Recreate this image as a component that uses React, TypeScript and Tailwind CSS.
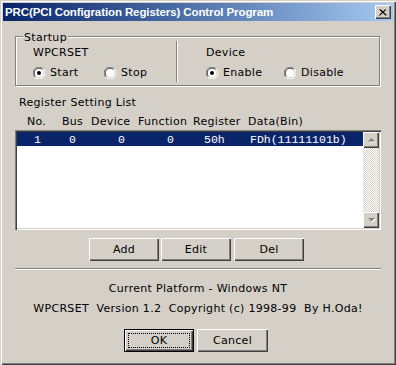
import React from "react";

const raised =
  "bg-[#d4d0c8] shadow-[inset_1px_1px_#ffffff,inset_-1px_-1px_#404040,inset_-2px_-2px_#808080]";

const Radio = ({ checked }: { checked: boolean }) => (
  <svg width="12" height="12" viewBox="0 0 12 12" className="shrink-0">
    <circle cx="6" cy="6" r="5.5" fill="#ffffff" />
    <path d="M1.8 10.2 A5.5 5.5 0 0 1 10.2 1.8" fill="none" stroke="#808080" />
    <path d="M10.2 1.8 A5.5 5.5 0 0 1 1.8 10.2" fill="none" stroke="#ffffff" />
    <path d="M2.6 9.4 A4.5 4.5 0 0 1 9.4 2.6" fill="none" stroke="#404040" />
    <path d="M9.4 2.6 A4.5 4.5 0 0 1 2.6 9.4" fill="none" stroke="#d4d0c8" />
    {checked && <circle cx="6" cy="6" r="2" fill="#000000" />}
  </svg>
);

const RadioItem = ({
  label,
  checked,
  className,
}: {
  label: string;
  checked: boolean;
  className?: string;
}) => (
  <div className={`flex items-center gap-[5px] ${className ?? ""}`}>
    <Radio checked={checked} />
    <span>{label}</span>
  </div>
);

const Arrow = ({ down }: { down?: boolean }) => (
  <svg width="7" height="4" viewBox="0 0 7 4" className="overflow-visible">
    <polygon
      points={down ? "1,1 8,1 4.5,4.5" : "1,4.5 8,4.5 4.5,1"}
      fill="#ffffff"
    />
    <polygon points={down ? "0,0 7,0 3.5,3.5" : "0,3.5 7,3.5 3.5,0"} fill="#808080" />
  </svg>
);

const Button = ({ label, className }: { label: string; className?: string }) => (
  <div
    className={`flex h-[23px] w-[70px] items-center justify-center ${raised} ${className ?? ""}`}
  >
    {label}
  </div>
);

export default function App() {
  return (
    <div className="h-[365px] w-[396px] bg-[#d4d0c8] p-[3px] font-['DejaVu_Sans',sans-serif] text-[11px] leading-[13px] tracking-[0.3px] text-black shadow-[inset_1px_1px_#d4d0c8,inset_2px_2px_#ffffff,inset_-1px_-1px_#404040,inset_-2px_-2px_#808080]">
      {/* title bar */}
      <div className="flex h-[18px] items-center justify-between bg-linear-to-r from-[#0a246a] to-[#a6caf0] pl-[2px] pr-[2px]">
        <span className="font-['Liberation_Sans',sans-serif] text-[11.5px] font-bold tracking-[-0.1px] text-white">
          PRC(PCI Configration Registers) Control Program
        </span>
        <div className={`flex h-[14px] w-[16px] items-center justify-center ${raised}`}>
          <svg width="8" height="7" viewBox="0 0 8 7">
            <path d="M0.5 0.5 L7 6.5 M1.5 0.5 L7.5 6 M7 0.5 L0.5 6.5 M6.5 0.5 L0.5 6" stroke="#000" strokeWidth="1" />
          </svg>
        </div>
      </div>

      <div className="px-[12px]">
        {/* Startup group */}
        <div className="relative mt-[15px] flex h-[50px] w-[365px] border border-[#808080] shadow-[inset_1px_1px_#ffffff,1px_1px_#ffffff]">
          <span className="absolute left-[7px] top-[-6px] bg-[#d4d0c8] px-[1px]">Startup</span>
          <div className="w-[160px] pl-[17px] pt-[9px]">
            <div>WPCRSET</div>
            <div className="mt-[7px] flex h-[13px]">
              <RadioItem label="Start" checked className="w-[71px]" />
              <RadioItem label="Stop" checked={false} />
            </div>
          </div>
          <div className="mt-[4px] h-[41px] w-[2px] border-l border-r border-l-[#808080] border-r-white" />
          <div className="pl-[28px] pt-[9px]">
            <div>Device</div>
            <div className="mt-[7px] flex h-[13px]">
              <RadioItem label="Enable" checked className="w-[78px]" />
              <RadioItem label="Disable" checked={false} />
            </div>
          </div>
        </div>

        <div className="ml-[4px] mt-[10px]">Register Setting List</div>

        <div className="mt-[6px] flex pl-[12px]">
          <span className="w-[35px]">No.</span>
          <span className="w-[29px]">Bus</span>
          <span className="w-[47px]">Device</span>
          <span className="w-[55px]">Function</span>
          <span className="w-[55px]">Register</span>
          <span>Data(Bin)</span>
        </div>

        {/* list box */}
        <div className="mt-[2px] flex h-[100px] w-[366px] bg-white p-[2px] shadow-[inset_1px_1px_#808080,inset_2px_2px_#404040,inset_-1px_-1px_#ffffff,inset_-2px_-2px_#d4d0c8]">
          <div className="flex-1">
            <div className="flex h-[14px] items-center bg-[#0a246a] pl-[17px] font-['Liberation_Mono',monospace] text-[11.5px] tracking-normal text-white">
              <span className="w-[35px]">1</span>
              <span className="w-[49px]">0</span>
              <span className="w-[49px]">0</span>
              <span className="w-[37px]">0</span>
              <span className="w-[46px]">50h</span>
              <span>FDh(11111101b)</span>
            </div>
          </div>
          <div className="flex w-[16px] flex-col">
            <div className={`flex h-[16px] items-center justify-center ${raised}`}>
              <Arrow />
            </div>
            <div className="flex-1 bg-[repeating-conic-gradient(#d4d0c8_0_25%,#ffffff_0_50%)] bg-[length:2px_2px]" />
            <div className={`flex h-[16px] items-center justify-center ${raised}`}>
              <Arrow down />
            </div>
          </div>
        </div>

        <div className="ml-[74px] mt-[8px] flex">
          <Button label="Add" />
          <Button label="Edit" className="ml-[2px]" />
          <Button label="Del" className="ml-[3px]" />
        </div>

        <div className="mt-[7px] h-[2px] w-[366px] border-b border-t border-b-white border-t-[#808080]" />

        <div className="mt-[12px] text-center">Current Platform - Windows NT</div>
        <div className="mt-[7px] whitespace-pre text-center">
          WPCRSET  Version 1.2  Copyright (c) 1998-99  By H.Oda!
        </div>

        <div className="ml-[109px] mt-[14px] flex gap-[3px]">
          <div className="h-[23px] w-[70px] border border-black">
            <div
              className={`flex h-full w-full items-center justify-center p-[3px] bg-[#d4d0c8] shadow-[inset_1px_1px_#ffffff,inset_-1px_-1px_#404040,inset_-2px_-2px_#808080]`}
            >
              <div className="flex h-full w-full items-center justify-center border border-dotted border-black">
                OK
              </div>
            </div>
          </div>
          <Button label="Cancel" className="w-[71px]" />
        </div>
      </div>
    </div>
  );
}
